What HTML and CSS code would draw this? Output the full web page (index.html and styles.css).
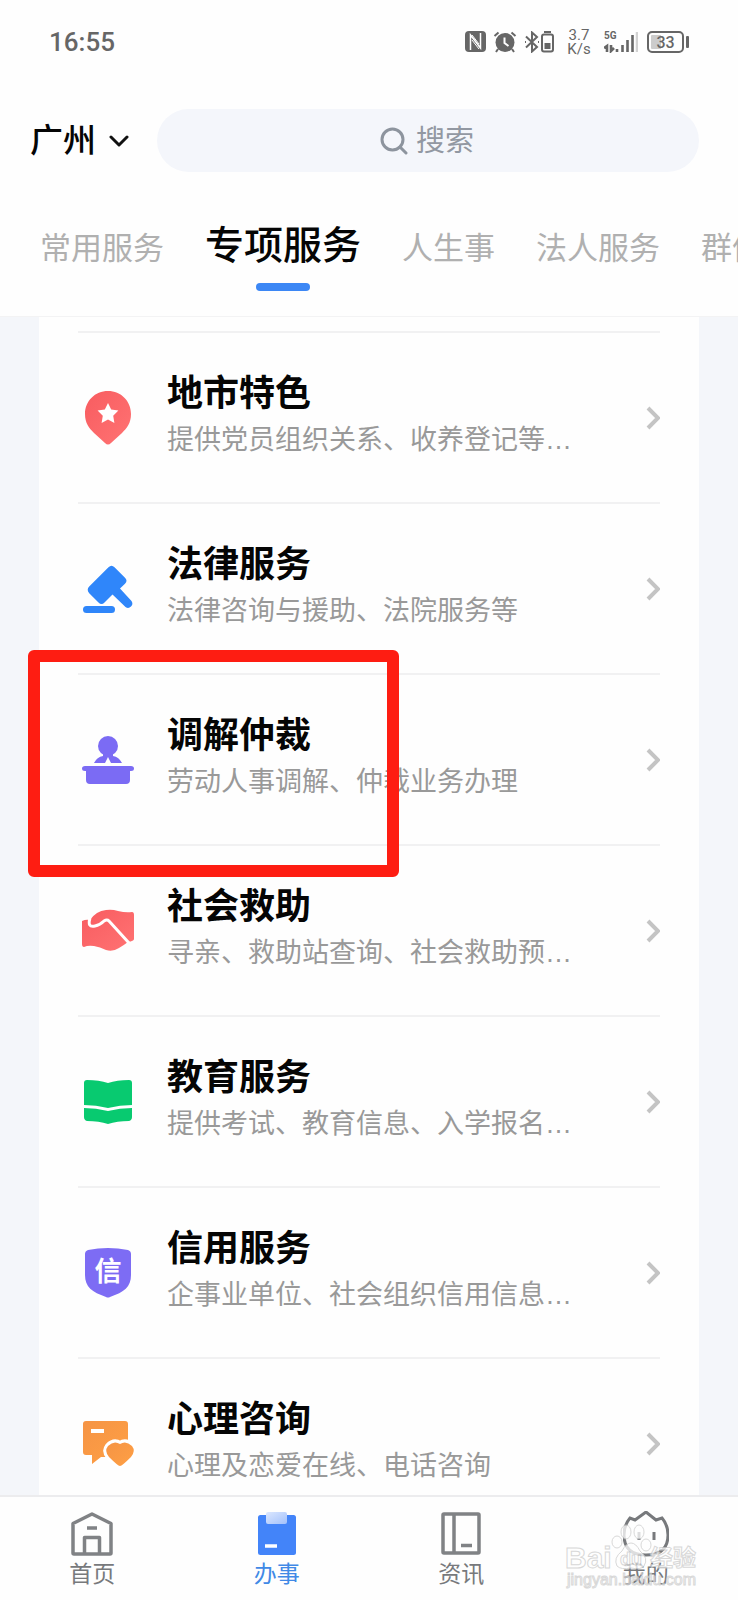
FILE: index.html
```html
<!DOCTYPE html>
<html lang="zh-CN">
<head>
<meta charset="utf-8">
<meta name="viewport" content="width=device-width, initial-scale=1">
<title>专项服务</title>
<link rel="stylesheet" href="styles.css">
</head>
<body>
<header class="header">
  <div class="status">
    <time class="clock">16:55</time>
    <div class="indicators">
      <svg class="nfc" width="21" height="22" viewBox="0 0 21 22"><rect x="0" y="0" width="21" height="21" rx="4" fill="#666"/><path d="M5.500 19V4l10 13V2" fill="none" stroke="#fff" stroke-width="1.500"/><path d="M7 4l7 9M7 9l7 9" fill="none" stroke="#fff" stroke-width="1"/></svg>
      <svg class="alarm" width="24" height="22" viewBox="0 0 24 22"><circle cx="12" cy="11.500" r="9.500" fill="#666"/><path d="M1.500 5 5.500 1.500M22.500 5l-4-3.500M5 18l-2 3M19 18l2 3" stroke="#666" stroke-width="2"/><path d="M11.500 6.500V12l4 3" fill="none" stroke="#fff" stroke-width="2"/></svg>
      <svg class="bluetooth" width="30" height="22" viewBox="0 0 30 22"><path d="M2 5.500 13 16l-5 4.500V1.500L13 6 2 16.500M1 11h1M14 11h1" fill="none" stroke="#666" stroke-width="2"/><rect x="18" y="3.500" width="11" height="17" rx="2" fill="none" stroke="#666" stroke-width="2"/><path d="M20 1h7" stroke="#666" stroke-width="2"/><path d="M20.500 12h6v6h-6z" fill="#666"/></svg>
      <span class="speed"><span>3.7</span><span>K/s</span></span>
      <span class="network">
        <span class="generation">5G</span>
        <svg width="34" height="22" viewBox="0 0 34 22"><path d="M0 17l3-2v6M7 14v6l3-3M13 18v3M18.500 14v7M23.500 9v12M28.500 4v17" fill="none" stroke="#666" stroke-width="2.600"/><path d="M33 1v20" stroke="#d2d2d2" stroke-width="2.500"/></svg>
      </span>
      <span class="battery"><span class="level">33</span></span>
    </div>
  </div>
  <div class="search-row">
    <button class="city" type="button">广州
      <svg width="20" height="14" viewBox="0 0 20 14"><path d="m2 3 8 8 8-8" fill="none" stroke="#111" stroke-width="3" stroke-linecap="round" stroke-linejoin="round"/></svg>
    </button>
    <label class="search">
      <svg width="28" height="28" viewBox="0 0 28 28"><circle cx="12.500" cy="12.500" r="10.500" fill="none" stroke="#8d949e" stroke-width="3"/><path d="m20 20 6 6" stroke="#8d949e" stroke-width="3" stroke-linecap="round"/></svg>
      <input class="search-input" type="text" placeholder="搜索" aria-label="搜索">
    </label>
  </div>
  <nav class="tabs">
    <a class="tab" href="#common">常用服务</a>
    <a class="tab tab-active" href="#special">专项服务</a>
    <a class="tab" href="#life">人生事</a>
    <a class="tab" href="#legal">法人服务</a>
    <a class="tab" href="#groups">群体</a>
  </nav>
</header>

<main class="main">
  <ul class="card">
    <li class="item"><a class="link" href="#city">
      <svg class="icon" viewBox="0 0 60 60"><defs><linearGradient id="red" x2="1" y2="1"><stop stop-color="#f85c60"/><stop offset="1" stop-color="#ff7373"/></linearGradient></defs><path d="M30 3C17 3 7 13 7 26c0 9 4 14 9 19l11 10q3 3 6 0l11-10c5-5 9-10 9-19C53 13 43 3 30 3z" fill="url(#red)"/><path d="m30 15 3.200 6.600 7.200 1-5.200 5.100 1.200 7.300-6.400-3.500-6.400 3.500 1.200-7.300-5.200-5.100 7.200-1z" fill="#fff"/></svg>
      <span class="text"><strong class="title">地市特色</strong><span class="desc">提供党员组织关系、收养登记等…</span></span>
      <svg class="arrow" viewBox="0 0 14 24"><path d="m2 2 10 10L2 22"/></svg></a></li>
    <li class="item"><a class="link" href="#law">
      <svg class="icon" viewBox="0 0 60 60" fill="#2f86fa"><path d="M11.200 27.500 30.500 8.200q3-3 6 0L47 18.700q3 3 0 6L42 29.500 53.500 42q2 3-.5 5.500t-5.500.500L34.500 35.500l-8 8q-3 3-6 0l-9.300-9.300q-3-3.500 0-6.700z"/><rect x="5" y="47" width="32" height="7" rx="3.500"/></svg>
      <span class="text"><strong class="title">法律服务</strong><span class="desc">法律咨询与援助、法院服务等</span></span>
      <svg class="arrow" viewBox="0 0 14 24"><path d="m2 2 10 10L2 22"/></svg></a></li>
    <li class="item"><a class="link" href="#mediation">
      <svg class="icon" viewBox="0 0 60 60" fill="#7b6bf4"><circle cx="30" cy="16" r="10"/><path d="M25 22h10v4q6 1 9 7H33l-3-6-3 6H16q3-6 9-7zM7 36h46q3 0 3 2.500T53 41h-1v9q0 4-4 4H12q-4 0-4-4v-9H7q-3 0-3-2.500T7 36z"/></svg>
      <span class="text"><strong class="title">调解仲裁</strong><span class="desc">劳动人事调解、仲裁业务办理</span></span>
      <svg class="arrow" viewBox="0 0 14 24"><path d="m2 2 10 10L2 22"/></svg></a>
      <span class="highlight"></span></li>
    <li class="item"><a class="link" href="#aid">
      <svg class="icon" viewBox="0 0 60 60"><path d="M4 20q4-2 8-1Q18 10 28 9q6-1 12 1 8 2 14 1 2 0 2 3v24q0 2-6 3-4 3-9 6-6 4-13 2-6-3-12-4-6-1-10 1-2 0-2-3z" fill="url(#red)"/><path d="M12 17q-3 10 5 8 5-1 9-5 3-2 5 0l20 22" fill="none" stroke="#fff" stroke-width="3"/></svg>
      <span class="text"><strong class="title">社会救助</strong><span class="desc">寻亲、救助站查询、社会救助预…</span></span>
      <svg class="arrow" viewBox="0 0 14 24"><path d="m2 2 10 10L2 22"/></svg></a></li>
    <li class="item"><a class="link" href="#education">
      <svg class="icon" viewBox="0 0 60 60" fill="#08ca70"><path d="M9 8q12 0 21 3 9-3 21-3 3 0 3 3v22q-12 0-24 3-12-3-24-3V11q0-3 3-3zM6 36q12 0 24 3 12-3 24-3v9q0 3-3 4-12 0-21 3-9-3-21-3-3-1-3-4z"/></svg>
      <span class="text"><strong class="title">教育服务</strong><span class="desc">提供考试、教育信息、入学报名…</span></span>
      <svg class="arrow" viewBox="0 0 14 24"><path d="m2 2 10 10L2 22"/></svg></a></li>
    <li class="item"><a class="link" href="#credit">
      <svg class="icon" viewBox="0 0 60 60"><path d="M10 7q20-4 40 0 3 1 3 4v21c0 12-7 17-21 22q-2 1-4 0C14 49 7 44 7 32V11q0-3 3-4z" fill="#7d6cf4"/><text class="badge-text" x="30" y="38" text-anchor="middle">信</text></svg>
      <span class="text"><strong class="title">信用服务</strong><span class="desc">企事业单位、社会组织信用信息…</span></span>
      <svg class="arrow" viewBox="0 0 14 24"><path d="m2 2 10 10L2 22"/></svg></a></li>
    <li class="item"><a class="link" href="#psychology">
      <svg class="icon" viewBox="0 0 60 60"><defs><linearGradient id="orange" x2="1" y2="1"><stop stop-color="#f59445"/><stop offset="1" stop-color="#ffa044"/></linearGradient></defs><path d="M8 7h39q3 0 3 3v33H23l-9 7v-9H8q-3 0-3-3V10q0-3 3-3z" fill="url(#orange)"/><path d="M13 15h13v4H13z" fill="#fff"/><path d="M42 52q-2 0-11-9-5-6-1-11 6-6 12-2 6-4 12 2 4 5-1 11-9 9-11 9z" fill="url(#orange)" stroke="#fff" stroke-width="6" paint-order="stroke"/></svg>
      <span class="text"><strong class="title">心理咨询</strong><span class="desc">心理及恋爱在线、电话咨询</span></span>
      <svg class="arrow" viewBox="0 0 14 24"><path d="m2 2 10 10L2 22"/></svg></a></li>
  </ul>
</main>

<footer class="footer">
  <nav class="bottom-nav">
    <a class="nav-item" href="#home"><svg class="nav-icon" viewBox="0 0 46 46"><path d="M4 12.500 23 3l19 9.500V42q0 1-1 1H5q-1 0-1-1zM15.500 43V26.500h15V43M18 17h10" fill="none" stroke="#808285" stroke-width="3.500" stroke-linejoin="round"/></svg>首页</a>
    <a class="nav-item nav-active" href="#services"><svg class="nav-icon" viewBox="0 0 46 46"><defs><linearGradient id="clip" x2="1" y2="1"><stop stop-color="#dbe7ff"/><stop offset="1" stop-color="#a3c1fb"/></linearGradient></defs><rect x="4" y="4" width="38" height="40" rx="2.500" fill="#4384f9"/><rect x="12" y="1" width="21" height="12" rx="2" fill="url(#clip)"/><path d="M11 35h12" stroke="#fff" stroke-width="3.500"/></svg>办事</a>
    <a class="nav-item" href="#news"><svg class="nav-icon" viewBox="0 0 46 46"><path d="M6 3h34q1 0 1 1v37q0 1-1 1H6q-1 0-1-1V4q0-1 1-1zM16 3v39M23 34.500h11" fill="none" stroke="#808285" stroke-width="3.500"/></svg>资讯</a>
    <a class="nav-item" href="#mine"><svg class="nav-icon" viewBox="0 0 46 46"><path d="m12 9 11-8 10 8 6-2q6 7 6 17 0 20-22 20T1 24Q1 14 7 7zM16 21v8M31 21v8" fill="none" stroke="#77797c" stroke-width="3"/></svg>我的</a>
  </nav>
  <svg class="watermark" width="140" height="72" viewBox="0 0 140 72" aria-hidden="true">
    <g fill="#fff" stroke="#ccc"><ellipse cx="53" cy="24" rx="5" ry="6"/><ellipse cx="62" cy="14" rx="5" ry="7"/><ellipse cx="75" cy="14" rx="5" ry="7"/><ellipse cx="82" cy="27" rx="5" ry="6"/><path d="M67 25q5 0 9 8 9 7 4 15-3 4-13 2-10 2-14-2-4-8 5-15 4-8 9-8z"/>
    <text class="mark-brand" x="1" y="50">Bai</text><text class="mark-du" x="56" y="47">du</text><text class="mark-cn" x="86" y="48">经验</text><text class="mark-url" x="3" y="67">jingyan.baidu.com</text></g>
  </svg>
</footer>
</body>
</html>
```
FILE: styles.css
```css
* {
  box-sizing: border-box;
}

body {
  margin: 0;
  height: 100vh;
  display: flex;
  flex-direction: column;
  overflow: hidden;
  background: #f4f6fa;
  color: #050505;
  font-family: "Liberation Sans", "Noto Sans CJK SC", sans-serif;
}

a {
  color: inherit;
  text-decoration: none;
}

svg {
  display: block;
  flex: none;
}

.header {
  flex: none;
  background: #fefefe;
  border-bottom: 1px solid #f3f3f4;
}

.status {
  height: 84px;
  padding: 0 49px;
  display: flex;
  align-items: center;
  justify-content: space-between;
  color: #666;
  font-family: Roboto, sans-serif;
}

.clock {
  font-size: 26px;
  font-weight: 500;
}

.indicators {
  display: flex;
  align-items: center;
  gap: 7px;
}

.speed {
  width: 24px;
  margin: 0 6px;
  display: flex;
  flex-direction: column;
  align-items: center;
  font-size: 15px;
  line-height: 14px;
}

.network {
  position: relative;
  margin-right: 2px;
}

.generation {
  position: absolute;
  top: 0;
  left: 0;
  font-size: 10px;
  font-weight: 700;
  line-height: 10px;
}

.battery {
  position: relative;
  width: 37px;
  height: 22px;
  margin-right: 5px;
  display: flex;
  align-items: center;
  justify-content: center;
  border: 2px solid #666;
  border-radius: 5px;
  background: linear-gradient(90deg, #ccc 35%, #fefefe 35%);
  box-shadow: inset 0 0 0 2px #fefefe;
}

.battery::after {
  content: "";
  position: absolute;
  right: -7px;
  width: 3px;
  height: 12px;
  border-radius: 1px;
  background: #666;
}

.level {
  font-size: 16px;
  font-weight: 500;
}

.search-row {
  padding: 25px 39px 0 30px;
  display: flex;
  align-items: center;
  gap: 28px;
}

.city {
  padding: 0;
  display: flex;
  align-items: center;
  gap: 13px;
  border: 0;
  background: none;
  color: inherit;
  font-family: inherit;
  font-size: 33px;
  font-weight: 500;
  line-height: 48px;
}

.search {
  flex: 1;
  height: 63px;
  display: flex;
  align-items: center;
  justify-content: center;
  gap: 8px;
  border-radius: 32px;
  background: #f4f6fb;
}

.search-input {
  width: 60px;
  padding: 0;
  border: 0;
  outline: 0;
  background: none;
  color: #8d949e;
  font-family: inherit;
  font-size: 29px;
  line-height: 44px;
}

.search-input::placeholder {
  color: #9298a2;
  opacity: 1;
}

.tabs {
  height: 144px;
  padding: 45px 0 0 40px;
  display: flex;
  gap: 41px;
  overflow: hidden;
  white-space: nowrap;
}

.tab {
  flex: none;
  color: #b0b0b0;
  font-size: 31px;
  line-height: 64px;
}

.tab-active {
  display: flex;
  flex-direction: column;
  align-items: center;
  color: #050505;
  font-size: 39px;
  font-weight: 500;
  line-height: 58px;
}

.tab-active::after {
  content: "";
  width: 54px;
  height: 8px;
  margin-top: 8px;
  border-radius: 4px;
  background: #3c87f5;
}

.main {
  flex: 1;
  min-height: 0;
  padding: 0 39px;
  overflow-y: auto;
  scrollbar-width: none;
}

.card {
  margin: 0;
  padding: 14px 39px;
  background: #fefefe;
  list-style: none;
}

.item {
  position: relative;
  border-top: 2px solid #f1f1f2;
}

.link {
  height: 169px;
  display: flex;
  align-items: center;
  gap: 29px;
}

.icon {
  width: 60px;
  height: 60px;
}

.badge-text {
  fill: #fff;
  font-size: 27px;
  font-weight: 700;
}

.text {
  flex: 1;
  min-width: 0;
  padding-bottom: 4px;
  display: flex;
  flex-direction: column;
}

.title {
  font-size: 36px;
  font-weight: 700;
  line-height: 48px;
}

.desc {
  color: #999;
  font-size: 27px;
  line-height: 44px;
  white-space: nowrap;
}

.arrow {
  width: 14px;
  height: 24px;
  fill: none;
  stroke: #c4c4c4;
  stroke-width: 4;
}

.highlight {
  position: absolute;
  z-index: 1;
  top: -25px;
  left: -50px;
  width: 371px;
  height: 227px;
  border: 12px solid #fe1d12;
  border-radius: 6px;
  pointer-events: none;
}

.footer {
  position: relative;
  flex: none;
  border-top: 2px solid #ececee;
  background: #fefefe;
}

.bottom-nav {
  height: 103px;
  display: grid;
  grid-template-columns: repeat(4, 1fr);
}

.nav-item {
  padding-top: 14px;
  display: flex;
  flex-direction: column;
  align-items: center;
  color: #77797c;
  font-size: 23px;
  line-height: 34px;
}

.nav-active {
  color: #4189e6;
}

.nav-icon {
  width: 46px;
  height: 46px;
}

.watermark {
  position: absolute;
  right: 34px;
  bottom: 10px;
  opacity: 0.75;
}

.mark-brand {
  font-size: 30px;
  font-weight: 700;
}

.mark-du {
  font-size: 18px;
  font-weight: 700;
}

.mark-cn {
  font-size: 23px;
  font-weight: 700;
}

.mark-url {
  font-size: 16px;
}
```
